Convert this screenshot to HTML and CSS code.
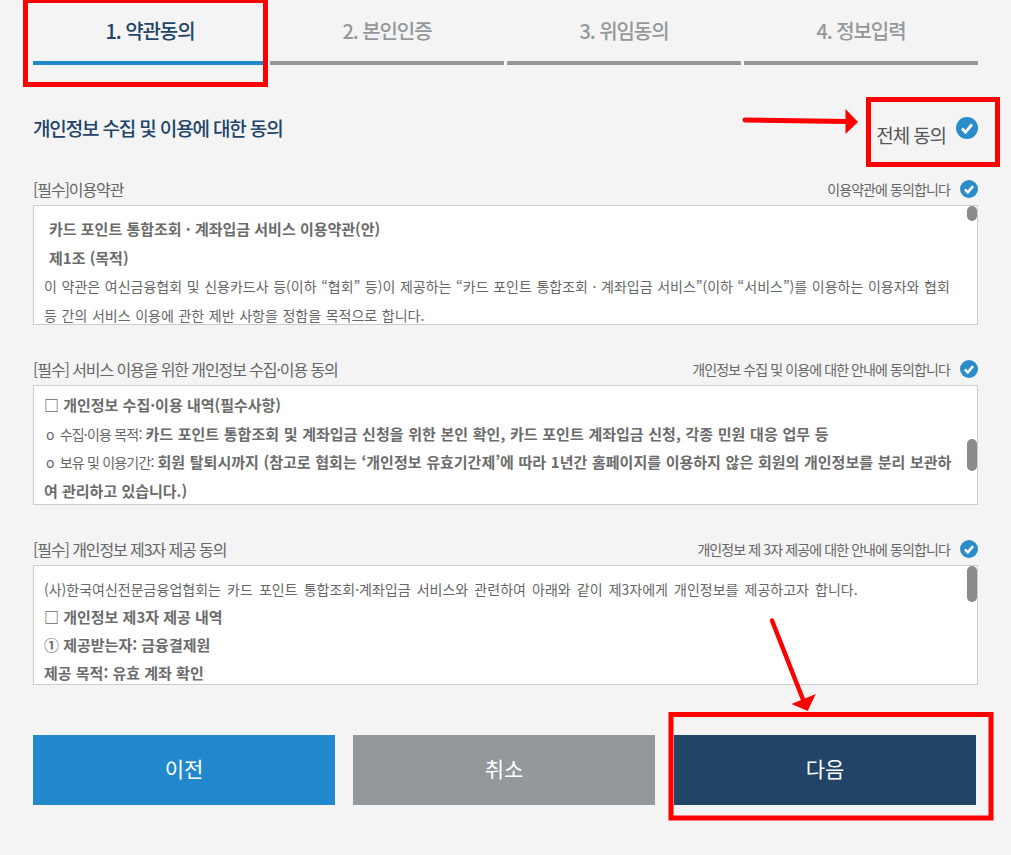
FILE: index.html
```html
<!DOCTYPE html>
<html lang="ko">
<head>
<meta charset="utf-8">
<title>약관동의</title>
<link rel="stylesheet" href="styles.css">
</head>
<body>
<main class="page">
  <nav class="tabs">
    <div class="tab active">1. 약관동의</div>
    <div class="tab">2. 본인인증</div>
    <div class="tab">3. 위임동의</div>
    <div class="tab">4. 정보입력</div>
  </nav>

  <header class="head">
    <h1 class="title">개인정보 수집 및 이용에 대한 동의</h1>
    <div class="all">
      <span class="all-label">전체 동의</span>
      <svg class="check big" viewBox="0 0 22 22"><circle cx="11" cy="11" r="11" fill="#2a8cc9"/><path d="M6 11.500l3.500 3.600L16 7.500" fill="none" stroke="#fff" stroke-width="2.800"/></svg>
    </div>
  </header>

  <section class="term">
    <div class="term-head">
      <h2 class="term-title">[필수]이용약관</h2>
      <div class="agree">이용약관에 동의합니다
        <svg class="check" viewBox="0 0 22 22"><circle cx="11" cy="11" r="11" fill="#2a8cc9"/><path d="M6 11.500l3.500 3.600L16 7.500" fill="none" stroke="#fff" stroke-width="3"/></svg>
      </div>
    </div>
    <div class="box box-a">
      <p class="line strong indent">카드 포인트 통합조회 · 계좌입금 서비스 이용약관(안)</p>
      <p class="line strong indent">제1조 (목적)</p>
      <p class="line wide-a">이 약관은 여신금융협회 및 신용카드사 등(이하 “협회” 등)이 제공하는 “카드 포인트 통합조회 · 계좌입금 서비스”(이하 “서비스”)를 이용하는 이용자와 협회</p>
      <p class="line wide-a">등 간의 서비스 이용에 관한 제반 사항을 정함을 목적으로 합니다.</p>
      <span class="thumb thumb-a"></span>
    </div>
  </section>

  <section class="term">
    <div class="term-head">
      <h2 class="term-title">[필수] 서비스 이용을 위한 개인정보 수집·이용 동의</h2>
      <div class="agree">개인정보 수집 및 이용에 대한 안내에 동의합니다
        <svg class="check" viewBox="0 0 22 22"><circle cx="11" cy="11" r="11" fill="#2a8cc9"/><path d="M6 11.500l3.500 3.600L16 7.500" fill="none" stroke="#fff" stroke-width="3"/></svg>
      </div>
    </div>
    <div class="box box-b">
      <p class="line strong">□ 개인정보 수집·이용 내역(필수사항)</p>
      <p class="line"><span class="lead"><span class="bullet">o</span>수집·이용 목적:</span> <b class="strong spaced">카드 포인트 통합조회 및 계좌입금 신청을 위한 본인 확인, 카드 포인트 계좌입금 신청, 각종 민원 대응 업무 등</b></p>
      <p class="line"><span class="lead"><span class="bullet">o</span>보유 및 이용기간:</span> <b class="strong spaced">회원 탈퇴시까지 (참고로 협회는 ‘개인정보 유효기간제’에 따라 1년간 홈페이지를 이용하지 않은 회원의 개인정보를 분리 보관하</b></p>
      <p class="line strong">여 관리하고 있습니다.)</p>
      <span class="thumb thumb-b"></span>
    </div>
  </section>

  <section class="term">
    <div class="term-head">
      <h2 class="term-title">[필수] 개인정보 제3자 제공 동의</h2>
      <div class="agree">개인정보 제 3자 제공에 대한 안내에 동의합니다
        <svg class="check" viewBox="0 0 22 22"><circle cx="11" cy="11" r="11" fill="#2a8cc9"/><path d="M6 11.500l3.500 3.600L16 7.500" fill="none" stroke="#fff" stroke-width="3"/></svg>
      </div>
    </div>
    <div class="box box-c">
      <p class="line wide-c">(사)한국여신전문금융업협회는 카드 포인트 통합조회·계좌입금 서비스와 관련하여 아래와 같이 제3자에게 개인정보를 제공하고자 합니다.</p>
      <p class="line strong">□ 개인정보 제3자 제공 내역</p>
      <p class="line strong">① 제공받는자: 금융결제원</p>
      <p class="line strong">제공 목적: 유효 계좌 확인</p>
      <span class="thumb thumb-c"></span>
    </div>
  </section>

  <div class="actions">
    <button class="btn btn-prev">이전</button>
    <button class="btn btn-cancel">취소</button>
    <button class="btn btn-next">다음</button>
  </div>
</main>

<svg class="marks" width="1011" height="855" viewBox="0 0 1011 855">
  <g fill="none" stroke="#ff0000" stroke-width="5">
    <rect x="25.500" y="0.500" width="240" height="84"/>
    <rect x="868.500" y="99.500" width="129" height="65"/>
    <rect x="671" y="714.500" width="320" height="103.500"/>
  </g>
  <path d="M745 120L847 121.500" fill="none" stroke="#ff0000" stroke-width="5" stroke-linecap="round"/>
  <path d="M845.500 109L858 122L845.500 134Z" fill="#ff0000"/>
  <path d="M772 620.500L804 702" fill="none" stroke="#ff0000" stroke-width="4.500" stroke-linecap="round"/>
  <path d="M791.500 704L815.700 694L807.700 711Z" fill="#ff0000"/>
</svg>
</body>
</html>
```
FILE: styles.css
```css
* { box-sizing: border-box; }
html, body { margin: 0; padding: 0; }
body {
  background: #f4f4f4;
  font-family: "Noto Sans CJK KR", "Noto Sans", sans-serif;
  color: #666;
  width: 1011px;
  height: 855px;
  overflow: hidden;
  position: relative;
}
.page { width: 945px; margin-left: 33px; }

.tabs { display: grid; grid-template-columns: repeat(4, 1fr); column-gap: 3px; height: 65px; }
.tab {
  border-bottom: 4px solid #94989b;
  color: #94989b;
  font-size: 20px;
  font-weight: 500;
  letter-spacing: -1.1px;
  text-align: center;
  line-height: 61px;
}
.tab.active { border-bottom-color: #2288cc; color: #22446a; }

.head { display: flex; justify-content: space-between; height: 116px; padding-top: 48px; }
.title { margin: 0; font-size: 19px; font-weight: 500; color: #22446a; line-height: 30px; letter-spacing: -1.15px; }
.all { display: flex; align-items: flex-start; gap: 10px; height: 40px; }
.all-label { font-size: 19px; color: #555; letter-spacing: -1.1px; line-height: 26px; padding-top: 9px; height: 35px; }

.check { width: 18px; height: 18px; flex: none; }
.check.big { width: 22px; height: 22px; margin-top: 4px; }

.term { height: 180px; }
.term-head { display: flex; justify-content: space-between; align-items: center; height: 24px; padding-bottom: 8px; }
.term-title { margin: 0; font-size: 16px; font-weight: 400; color: #666; letter-spacing: -1.1px; line-height: 22px; }
.agree { display: flex; align-items: center; gap: 10px; font-size: 14px; color: #666; letter-spacing: -0.9px; }

.box {
  position: relative;
  height: 120px;
  background: #fff;
  border: 1px solid #cccccc;
  padding: 9px 10px 0;
  overflow: hidden;
}
.box-b { padding-top: 5px; }
.box-c { padding-top: 9px; }
.box-c .line { line-height: 28px; }
.line { margin: 0; font-size: 14px; line-height: 28.5px; white-space: nowrap; color: #666; }
.wide-a { word-spacing: 0.7px; }
.wide-c { word-spacing: 2.2px; }
.strong { font-weight: 700; font-size: 15px; color: #6b6b6b; }
.spaced { word-spacing: 0.5px; }
.indent { padding-left: 5px; }
.lead { letter-spacing: -0.8px; padding-left: 2px; }
.bullet { margin-right: 6px; }

.thumb { position: absolute; right: 0; width: 10px; background: #8a8a8a; border-radius: 5px; }
.thumb-a { top: 0; height: 15px; }
.thumb-b { top: 53px; height: 32px; }
.thumb-c { top: 0; height: 36px; }

.actions { display: flex; gap: 18px; margin-top: 14px; }
.btn { width: 302px; height: 70px; border: 0; color: #fff; font-family: inherit; font-size: 21px; font-weight: 400; padding: 0 0 4px; }
.btn-prev { background: #2288cc; }
.btn-cancel { background: #94989b; }
.btn-next { background: #224466; margin-left: 1px; }

.marks { position: absolute; left: 0; top: 0; pointer-events: none; }
```
